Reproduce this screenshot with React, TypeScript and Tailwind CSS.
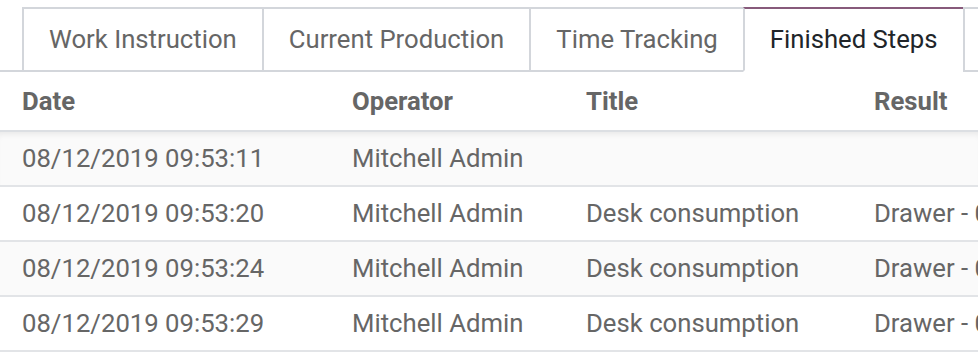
const tabs = [
  { label: 'Work Instruction', active: false },
  { label: 'Current Production', active: false },
  { label: 'Time Tracking', active: false },
  { label: 'Finished Steps', active: true },
  { label: 'Quality', active: false },
];

const rows = [
  { date: '08/12/2019 09:53:11', operator: 'Mitchell Admin', title: '', result: '' },
  { date: '08/12/2019 09:53:20', operator: 'Mitchell Admin', title: 'Desk consumption', result: 'Drawer - 0.00' },
  { date: '08/12/2019 09:53:24', operator: 'Mitchell Admin', title: 'Desk consumption', result: 'Drawer - 0.00' },
  { date: '08/12/2019 09:53:29', operator: 'Mitchell Admin', title: 'Desk consumption', result: 'Drawer - 0.00' },
];

const cols = 'grid grid-cols-[352px_234px_288px_1fr]';

export default function App() {
  return (
    <div className="w-[978px] h-[355px] overflow-hidden bg-white font-['Roboto',sans-serif] text-[25.7px] text-[#666666]">
      <div className="pt-[7px] pl-[22px] flex border-b-2 border-[#d3d6db] whitespace-nowrap">
        {tabs.map((tab) => (
          <div
            key={tab.label}
            className={`-mb-[2px] h-[65px] px-[25px] flex items-center border-l-2 border-t-2 ${
              tab.active
                ? 'border-t-[#875a7b] border-l-[#d3d6db] bg-white text-[#212529] border-b-2 border-b-white'
                : 'border-[#d3d6db] border-b-2 border-b-[#d3d6db]'
            }`}
          >
            {tab.label}
          </div>
        ))}
      </div>

      <div className={`${cols} h-[60px] items-center font-bold border-b-2 border-[#dcdfe3]`}>
        <div className="pl-[22px]">Date</div>
        <div>Operator</div>
        <div>Title</div>
        <div>Result</div>
      </div>

      {rows.map((row, i) => (
        <div
          key={row.date}
          className={`${cols} h-[55px] items-center whitespace-nowrap border-b-2 border-[#e2e4e7] ${
            i % 2 === 0 ? 'bg-[#fafafa]' : 'bg-white'
          } ${i === 0 ? 'shadow-[inset_0_6px_6px_-4px_rgba(0,0,0,0.08)]' : ''}`}
        >
          <div className="pl-[22px]">{row.date}</div>
          <div>{row.operator}</div>
          <div>{row.title}</div>
          <div>{row.result}</div>
        </div>
      ))}
    </div>
  );
}
